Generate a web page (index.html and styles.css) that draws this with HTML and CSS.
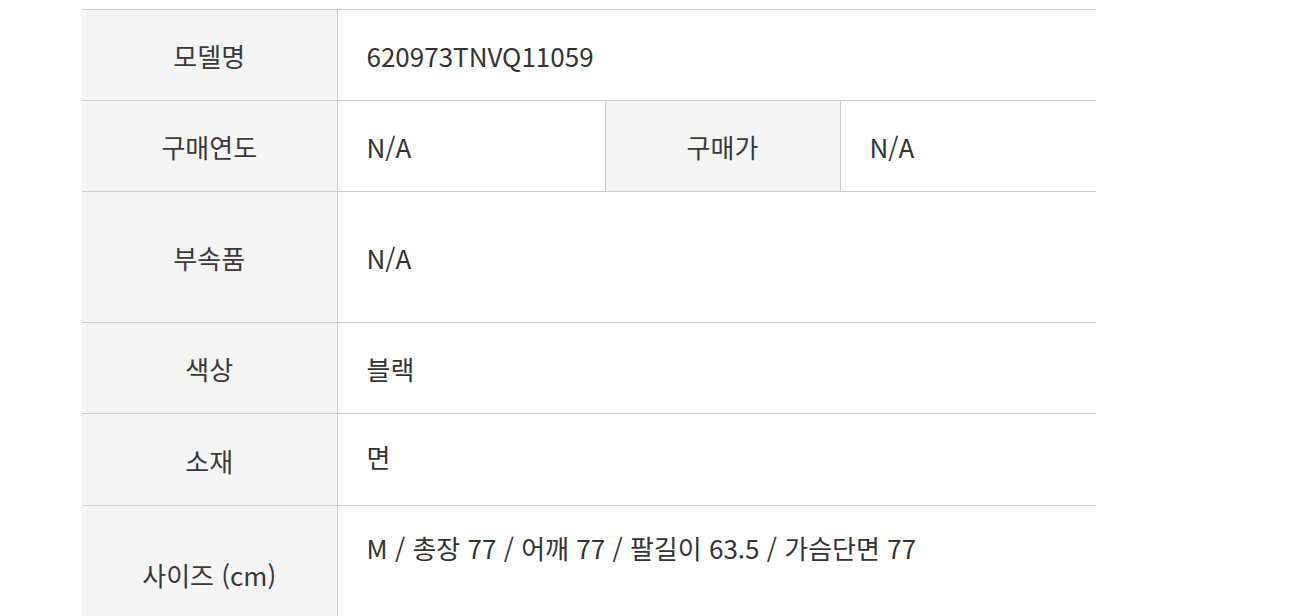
FILE: index.html
```html
<!DOCTYPE html>
<html lang="ko">
<head>
<meta charset="utf-8">
<link rel="stylesheet" href="styles.css">
</head>
<body>
<div class="wrap">
  <table class="spec">
    <colgroup>
      <col class="c1"><col class="c2"><col class="c3"><col class="c4">
    </colgroup>
    <tbody>
      <tr class="r-std">
        <th>모델명</th>
        <td colspan="3">620973TNVQ11059</td>
      </tr>
      <tr class="r-std">
        <th>구매연도</th>
        <td>N/A</td>
        <th>구매가</th>
        <td>N/A</td>
      </tr>
      <tr class="r-tall">
        <th>부속품</th>
        <td colspan="3">N/A</td>
      </tr>
      <tr class="r-std">
        <th>색상</th>
        <td colspan="3">블랙</td>
      </tr>
      <tr class="r-std5">
        <th>소재</th>
        <td colspan="3" class="v-up">면</td>
      </tr>
      <tr class="r-size">
        <th>사이즈 (cm)</th>
        <td colspan="3" class="v-top">M / 총장 77 / 어깨 77 / 팔길이 63.5 / 가슴단면 77</td>
      </tr>
    </tbody>
  </table>
</div>
</body>
</html>
```

FILE: styles.css
```css
html, body {
  margin: 0;
  padding: 0;
  background: #ffffff;
}

body {
  font-family: "Noto Sans CJK KR", "Noto Sans", sans-serif;
  color: #333333;
  overflow: hidden;
}

.wrap {
  padding: 9px 0 0 82px;
}

.spec {
  width: 1014px;
  border-collapse: collapse;
  table-layout: fixed;
  font-size: 26px;
}

.c1 { width: 255px; }
.c2 { width: 268px; }
.c3 { width: 235px; }
.c4 { width: 256px; }

.spec tr {
  border-top: 1px solid #cccccc;
  border-bottom: 1px solid #cccccc;
}

.spec th,
.spec td {
  padding: 2px 0 0 0;
  line-height: 34px;
  vertical-align: middle;
  border-left: 1px solid #cccccc;
}

.spec tr > :first-child {
  border-left: none;
}

.spec th {
  background: #f5f5f5;
  font-weight: 400;
  text-align: center;
  color: #393939;
}

.spec td {
  text-align: left;
  padding-left: 29px;
  color: #333333;
}

.r-std th, .r-std td { height: 88px; }
.r-std5 th { height: 89px; }
.r-tall th, .r-tall td { height: 128px; }
.r-size th { height: 134px; }

.spec td.v-up {
  height: 85px;
  padding-top: 0;
  padding-bottom: 6px;
}

.spec td.v-top {
  vertical-align: top;
  height: 111px;
  padding-top: 25px;
}
```
